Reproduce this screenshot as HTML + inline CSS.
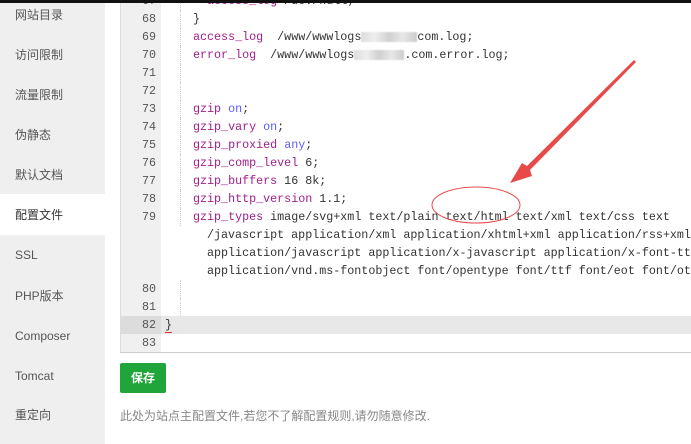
<!DOCTYPE html>
<html><head><meta charset="utf-8"><style>
*{margin:0;padding:0;box-sizing:border-box}
body{width:691px;height:444px;overflow:hidden;background:#fff;position:relative;font-family:"Liberation Sans","Noto Sans CJK SC",sans-serif}
.topbar{position:absolute;left:0;top:0;width:691px;height:3px;background:#111;z-index:10}
.side{position:absolute;left:0;top:3px;width:105px;height:441px;background:#efefef}
.item{position:absolute;left:15px;font-size:12px;color:#555;line-height:16px}
.active{position:absolute;left:0;top:194px;width:105px;height:41px;background:#fff}
.ed{position:absolute;left:120px;top:0;width:580px;height:353px;border-left:1px solid #ddd;border-bottom:1px solid #ccc;background:#fff;overflow:hidden}
.gut{position:absolute;left:0;top:0;width:40px;height:352px;background:#f0f0f0}
.hl{position:absolute;left:0;top:316px;width:580px;height:18px;background:#e8e8e8}
.hlg{position:absolute;left:0;top:316px;width:40px;height:18px;background:#dcdcdc}
.ln{position:absolute;left:0;width:35px;text-align:right;font:11.7px "Liberation Mono","DejaVu Sans Mono",monospace;color:#555;line-height:18px}
.c{position:absolute;left:72px;font:11.7px "Liberation Mono","DejaVu Sans Mono",monospace;color:#333;line-height:18px;white-space:pre}
.k{color:#a0208c}.v{color:#5c5cff}
.g{position:absolute;left:59px;width:0;border-left:1px dotted #ccc;height:18px}
.blur{display:inline-block;width:56px;height:10px;background:linear-gradient(90deg,#ddd,#eee,#d0d0d0,#e8e8e8,#ccc);vertical-align:middle;filter:blur(0.6px)}
.btn{position:absolute;left:120px;top:363px;width:46px;height:30px;background:#20a53a;border-radius:2px;color:#fff;font-size:12px;font-weight:bold;text-align:center;line-height:30px}
.note{position:absolute;left:120px;top:408px;font-size:12px;color:#888;line-height:16px}
</style></head><body>
<div class="side"></div>
<div class="active"></div>
<div class="item" style="top:7px">网站目录</div>
<div class="item" style="top:47px">访问限制</div>
<div class="item" style="top:87px">流量限制</div>
<div class="item" style="top:127px">伪静态</div>
<div class="item" style="top:167px">默认文档</div>
<div class="item" style="top:207px;color:#333">配置文件</div>
<div class="item" style="top:247px">SSL</div>
<div class="item" style="top:288px">PHP版本</div>
<div class="item" style="top:328px">Composer</div>
<div class="item" style="top:368px">Tomcat</div>
<div class="item" style="top:407px">重定向</div>

<div class="ed">
<div class="gut"></div>
<div class="hl"></div><div class="hlg"></div>
<div class="ln" style="top:-8px">67</div>
<div class="ln" style="top:10px">68</div>
<div class="ln" style="top:28px">69</div>
<div class="ln" style="top:46px">70</div>
<div class="ln" style="top:64px">71</div>
<div class="ln" style="top:82px">72</div>
<div class="ln" style="top:100px">73</div>
<div class="ln" style="top:118px">74</div>
<div class="ln" style="top:136px">75</div>
<div class="ln" style="top:154px">76</div>
<div class="ln" style="top:172px">77</div>
<div class="ln" style="top:190px">78</div>
<div class="ln" style="top:208px">79</div>
<div class="ln" style="top:280px">80</div>
<div class="ln" style="top:298px">81</div>
<div class="ln" style="top:316px">82</div>
<div class="ln" style="top:334px">83</div>
<div class="g" style="top:-8px"></div><div class="g" style="top:10px"></div><div class="g" style="top:28px"></div><div class="g" style="top:46px"></div><div class="g" style="top:64px"></div><div class="g" style="top:82px"></div><div class="g" style="top:100px"></div><div class="g" style="top:118px"></div><div class="g" style="top:136px"></div><div class="g" style="top:154px"></div><div class="g" style="top:172px"></div><div class="g" style="top:190px"></div><div class="g" style="top:208px"></div><div class="g" style="top:280px"></div><div class="g" style="top:298px"></div>
<div class="c" style="top:-8px;left:86px"><span class="k">access_log</span> /dev/null;</div>
<div class="c" style="top:10px">}</div>
<div class="c" style="top:28px"><span class="k">access_log</span>  /www/wwwlogs<span class="blur"></span>com.log;</div>
<div class="c" style="top:46px"><span class="k">error_log</span>  /www/wwwlogs<span class="blur" style="width:50px"></span>.com.error.log;</div>
<div class="c" style="top:100px"><span class="k">gzip</span> <span class="v">on</span>;</div>
<div class="c" style="top:118px"><span class="k">gzip_vary</span> <span class="v">on</span>;</div>
<div class="c" style="top:136px"><span class="k">gzip_proxied</span> <span class="v">any</span>;</div>
<div class="c" style="top:154px"><span class="k">gzip_comp_level</span> 6;</div>
<div class="c" style="top:172px"><span class="k">gzip_buffers</span> 16 8k;</div>
<div class="c" style="top:190px"><span class="k">gzip_http_version</span> 1.1;</div>
<div class="c" style="top:208px"><span class="k">gzip_types</span> image/svg+xml text/plain text/html text/xml text/css text</div>
<div class="c" style="top:226px;left:86px">/javascript application/xml application/xhtml+xml application/rss+xml</div>
<div class="c" style="top:244px;left:86px">application/javascript application/x-javascript application/x-font-ttf</div>
<div class="c" style="top:262px;left:86px">application/vnd.ms-fontobject font/opentype font/ttf font/eot font/otf</div>
<div class="c" style="top:316px;left:44px">}</div>
<div style="position:absolute;left:44px;top:332px;width:7px;height:1px;background:#d33"></div>
</div>

<div class="btn">保存</div>
<div class="note">此处为站点主配置文件,若您不了解配置规则,请勿随意修改.</div>

<svg style="position:absolute;left:0;top:0" width="691" height="444">
<ellipse cx="476" cy="205" rx="44" ry="18" fill="none" stroke="#e74c4c" stroke-width="1"/>
<polygon points="634,60 527,166 522,163 510,183 532,176 530,170 636,62" fill="#e84a4a"/>
</svg>
<div class="topbar"></div>
</body></html>
